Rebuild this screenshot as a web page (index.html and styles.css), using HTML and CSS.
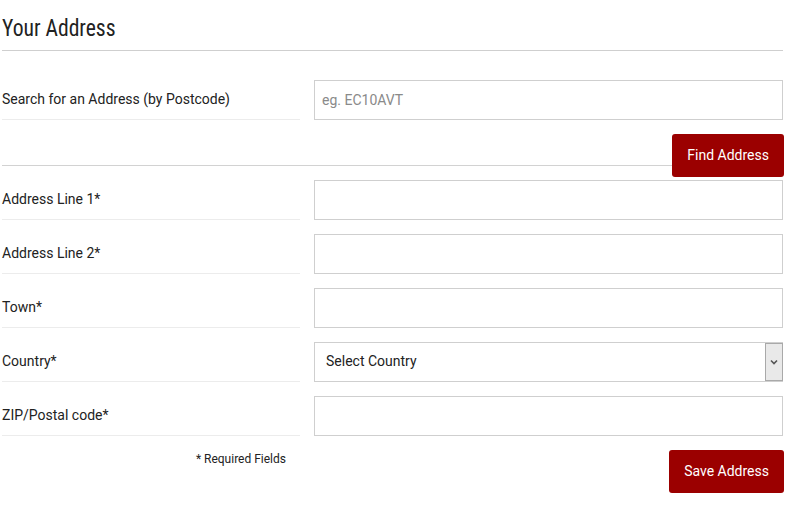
FILE: index.html
```html
<!DOCTYPE html>
<html lang="en">
<head>
<meta charset="utf-8">
<title>Your Address</title>
<link rel="stylesheet" href="styles.css">
</head>
<body>
<div class="page">
  <h1 class="title"><span class="title-text">Your Address</span></h1>

  <div class="row">
    <label class="label" for="pc">Search for an Address (by Postcode)</label>
    <input class="field" id="pc" type="text" placeholder="eg. EC10AVT">
  </div>
  <div class="find-row">
    <button class="btn" type="button">Find Address</button>
  </div>
  <div class="divider"></div>

  <div class="row">
    <label class="label" for="a1">Address Line 1*</label>
    <input class="field" id="a1" type="text">
  </div>
  <div class="row">
    <label class="label" for="a2">Address Line 2*</label>
    <input class="field" id="a2" type="text">
  </div>
  <div class="row">
    <label class="label" for="town">Town*</label>
    <input class="field" id="town" type="text">
  </div>
  <div class="row">
    <label class="label" for="country">Country*</label>
    <div class="select-wrap">
      <select class="select" id="country"><option>Select Country</option></select>
      <span class="select-arrow"><svg width="8" height="6" viewBox="0 0 8 6"><path d="M1 1.5 L4 4.5 L7 1.5" fill="none" stroke="#555" stroke-width="1.6"/></svg></span>
    </div>
  </div>
  <div class="row">
    <label class="label" for="zip">ZIP/Postal code*</label>
    <input class="field" id="zip" type="text">
  </div>

  <div class="footer">
    <div class="required">* Required Fields</div>
    <div class="actions"><button class="btn btn-save" type="button">Save Address</button></div>
  </div>
</div>
</body>
</html>
```

FILE: styles.css
```css
html, body {
  margin: 0;
  padding: 0;
  background: #fff;
}
body {
  font-family: Roboto, "Liberation Sans", Arial, sans-serif;
  color: #222;
  font-size: 14px;
}
.page {
  margin-left: 2px;
  width: 781px;
}
.title {
  margin: 0 0 29px 0;
  padding: 13px 0 7px 0;
  border-bottom: 1px solid #cfcfcf;
  font-family: "Roboto Condensed", Roboto, "Liberation Sans", sans-serif;
  font-weight: 400;
  font-size: 24px;
  line-height: 30px;
  color: #222;
}
.title-text {
  display: inline-block;
  transform: scaleX(0.9);
  transform-origin: left center;
}
.row {
  display: grid;
  grid-template-columns: 298px 1fr;
  column-gap: 14px;
  height: 40px;
  margin-bottom: 14px;
}
.row:last-of-type {
  margin-bottom: 0;
}
.label {
  display: flex;
  align-items: center;
  padding-bottom: 2px;
  border-bottom: 1px solid #ececec;
  color: #222;
  font-size: 14px;
}
.field {
  box-sizing: border-box;
  height: 40px;
  width: 100%;
  margin: 0;
  border: 1px solid #cfcfcf;
  padding: 0 7px 1px;
  font-family: Roboto, "Liberation Sans", sans-serif;
  font-size: 14px;
  color: #222;
  background: #fff;
  outline: none;
}
.field::placeholder {
  color: #8a8a8a;
}
.find-row {
  display: flex;
  justify-content: flex-end;
  height: 31px;
}
.find-row .btn {
  position: relative;
  z-index: 1;
  margin-right: -1px;
}
.divider {
  height: 1px;
  background: #d2d2d2;
  margin-bottom: 14px;
}
.btn {
  box-sizing: border-box;
  height: 43px;
  padding: 0 15px 2px;
  border: none;
  border-radius: 3px;
  background: #9b0000;
  color: #fff;
  font-family: Roboto, "Liberation Sans", sans-serif;
  font-size: 14px;
  cursor: pointer;
  flex: none;
}
.row + .find-row {
  margin-top: 14px;
}
.select-wrap {
  box-sizing: border-box;
  height: 40px;
  display: flex;
  border: 1px solid #cfcfcf;
  background: #fff;
}
.select {
  flex: 1;
  appearance: none;
  -webkit-appearance: none;
  border: none;
  background: transparent;
  padding: 0 11px 3px;
  margin: 0;
  font-family: Roboto, "Liberation Sans", sans-serif;
  font-size: 14px;
  color: #222;
  outline: none;
}
.select-arrow {
  box-sizing: border-box;
  width: 18px;
  margin: 0 -1px 0 0;
  border: 1px solid #a9a9a9;
  background: #e9e9e9;
  display: flex;
  align-items: center;
  justify-content: center;
}
.footer {
  display: grid;
  grid-template-columns: 298px 1fr;
  column-gap: 14px;
  margin-top: 14px;
}
.required {
  text-align: right;
  padding-right: 14px;
  padding-top: 2px;
  font-size: 12px;
  line-height: 14px;
  color: #222;
}
.actions {
  display: flex;
  justify-content: flex-end;
}
.btn-save {
  margin-right: -1px;
}
```
